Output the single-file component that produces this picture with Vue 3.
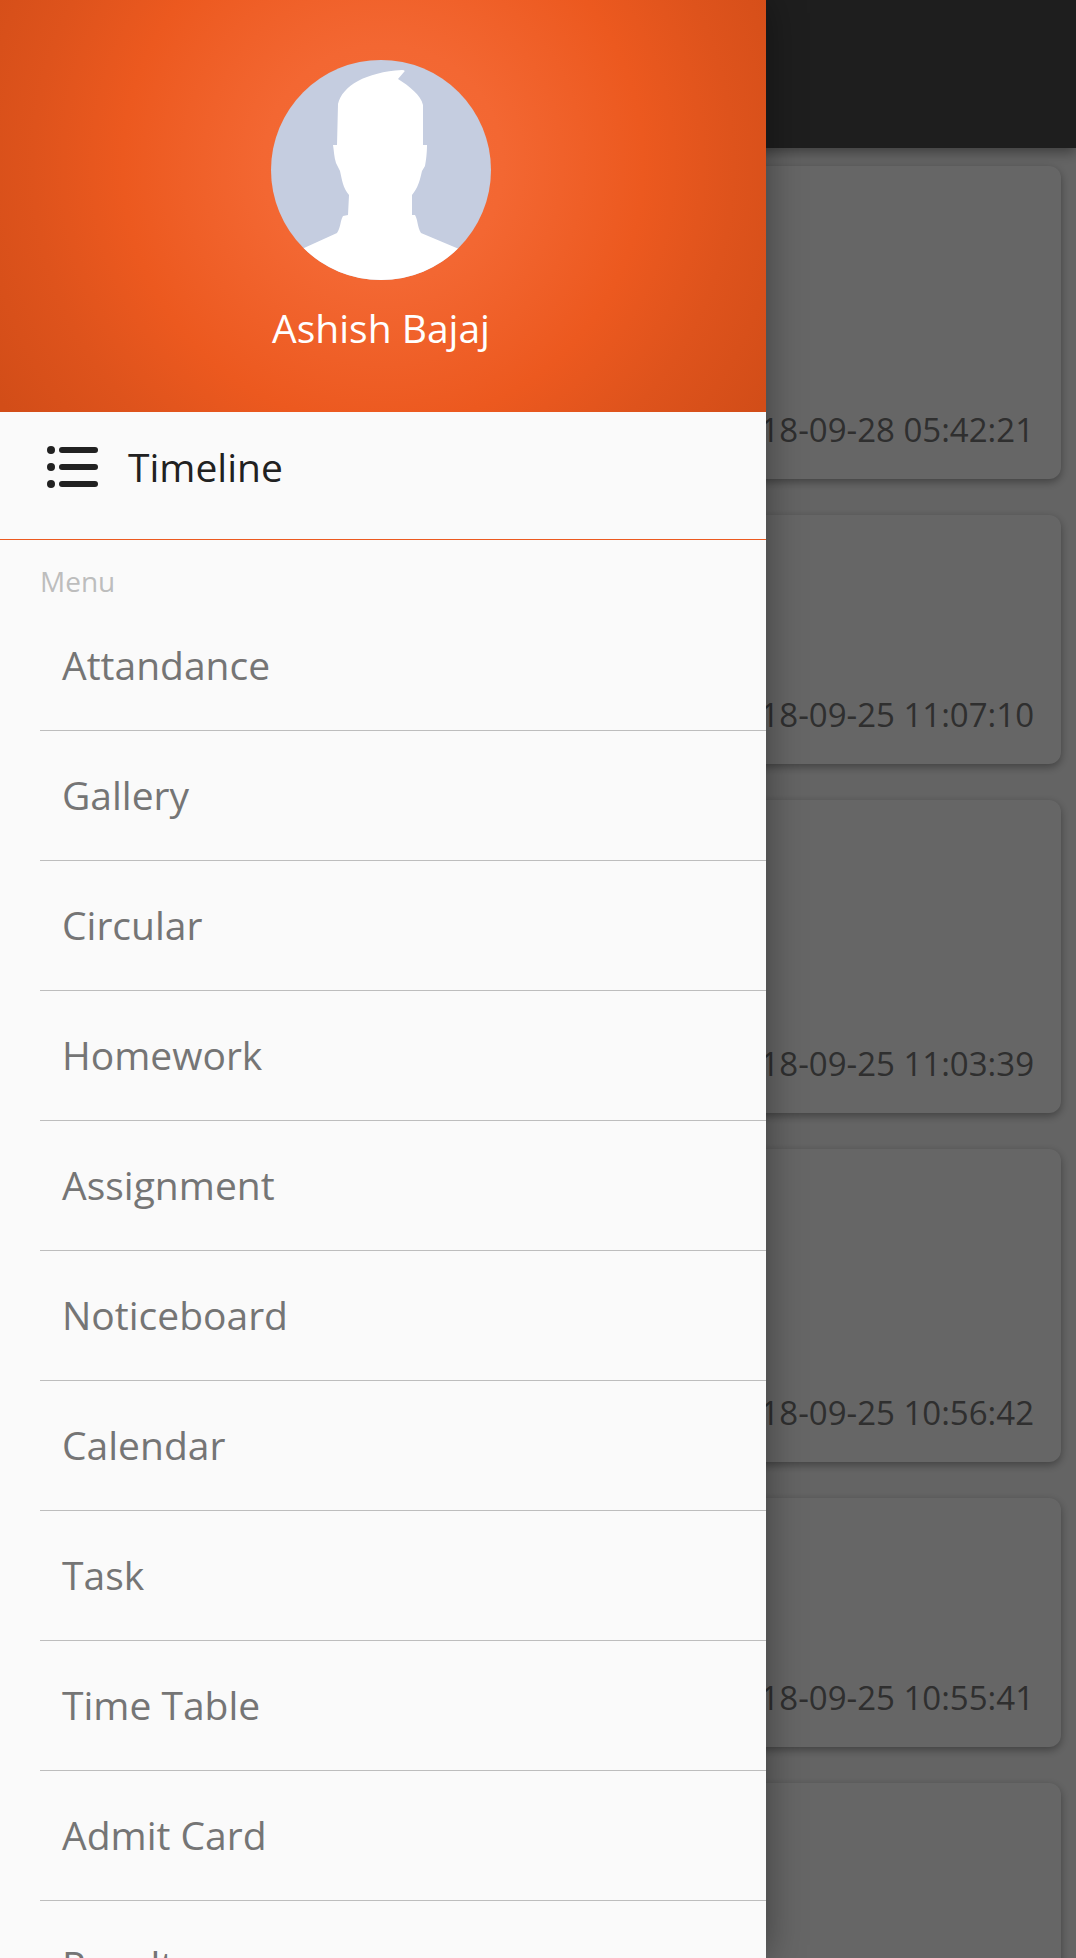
<script setup>
const posts = [
  { id: 1, time: '2018-09-28 05:42:21', tall: true },
  { id: 2, time: '2018-09-25 11:07:10', tall: false },
  { id: 3, time: '2018-09-25 11:03:39', tall: true },
  { id: 4, time: '2018-09-25 10:56:42', tall: true },
  { id: 5, time: '2018-09-25 10:55:41', tall: false },
  { id: 6, time: '', tall: true },
]

const menu = [
  'Attandance',
  'Gallery',
  'Circular',
  'Homework',
  'Assignment',
  'Noticeboard',
  'Calendar',
  'Task',
  'Time Table',
  'Admit Card',
  'Result',
]
</script>

<template>
  <div class="app">
    <header class="app-bar"></header>
    <main class="feed">
      <article v-for="post in posts" :key="post.id" class="card" :class="{ tall: post.tall }">
        <time v-if="post.time">{{ post.time }}</time>
      </article>
    </main>

    <div class="scrim"></div>

    <aside class="drawer">
      <div class="profile">
        <svg class="avatar" viewBox="0 0 220 220" aria-hidden="true">
          <defs>
            <clipPath id="avatar-clip"><circle cx="110" cy="110" r="110" /></clipPath>
          </defs>
          <g clip-path="url(#avatar-clip)">
            <rect width="220" height="220" fill="#c5cde0" />
            <path
              fill="#fff"
              d="M67 44C69 35 76 27 87 21C98 15 113 11 131 10Q135 10 133 12L127 19C138 26 150 35 152 45V85H156C156 93 155 101 154 106L151 111C149 120 147 128 141 135V155H144C147 160 146 166 150 173L188 189L220 210V220H0V210L33 188L66 173C70 167 69 161 72 156L77 155L78 135C72 128 71 120 69 111L65 103C63 97 63 91 62 85H66Z"
            />
          </g>
        </svg>
        <span class="name">Ashish Bajaj</span>
      </div>

      <nav>
        <a class="timeline" href="#timeline">
          <svg class="list-icon" viewBox="0 0 52 42" aria-hidden="true">
            <g fill="#212121">
              <circle cx="4" cy="4" r="4" />
              <circle cx="4" cy="21" r="4" />
              <circle cx="4" cy="38" r="4" />
              <rect x="12" y="1" width="39" height="6" rx="3" />
              <rect x="12" y="18" width="39" height="6" rx="3" />
              <rect x="12" y="35" width="39" height="6" rx="3" />
            </g>
          </svg>
          <span>Timeline</span>
        </a>
        <h2 class="section">Menu</h2>
        <ul class="menu">
          <li v-for="item in menu" :key="item">
            <a :href="'#' + item.toLowerCase().replace(' ', '-')">{{ item }}</a>
          </li>
        </ul>
      </nav>
    </aside>
  </div>
</template>

<style>
body {
  margin: 0;
}
</style>

<style scoped>
.app {
  position: relative;
  height: 100vh;
  overflow: hidden;
  background: #fafafa;
  font-family: "Open Sans", "Noto Sans", sans-serif;
}

.app-bar {
  position: relative;
  height: 148px;
  background: #4b4b4b;
  box-shadow: 0 4px 12px rgba(0, 0, 0, 0.4);
}

.feed {
  display: flex;
  flex-direction: column;
  gap: 36px;
  padding: 18px 15px;
}

.card {
  display: flex;
  flex: none;
  align-items: flex-end;
  justify-content: flex-end;
  box-sizing: border-box;
  height: 249px;
  padding: 0 27px 26px;
  border-radius: 12px;
  background: #fff;
  box-shadow: 0 3px 8px rgba(0, 0, 0, 0.35);
  color: #757575;
  font-size: 33px;
  line-height: 46px;
}

.card.tall {
  height: 313px;
}

.scrim {
  position: absolute;
  inset: 0;
  background: rgba(0, 0, 0, 0.6);
}

.drawer {
  position: absolute;
  inset: 0 310px 0 0;
  overflow: hidden;
  background: #fafafa;
  box-shadow: 0 0 36px rgba(0, 0, 0, 0.4);
}

.profile {
  display: flex;
  flex-direction: column;
  align-items: center;
  box-sizing: border-box;
  height: 412px;
  padding: 60px 4px 0 0;
  background: radial-gradient(circle at 50% 40%, #f56c38 0, #f36732 120px, #ec591f 260px, #de531c 350px, #d24d18 450px);
}

.avatar {
  width: 220px;
  height: 220px;
}

.name {
  margin-top: 21px;
  color: #fff;
  font-size: 39px;
  line-height: 54px;
}

.timeline {
  display: flex;
  align-items: center;
  gap: 29px;
  height: 109px;
  padding: 0 47px 18px;
  border-bottom: 1px solid #ec5a20;
  color: #212121;
  font-size: 39px;
  line-height: 54px;
  text-decoration: none;
}

.list-icon {
  width: 52px;
  height: 42px;
}

.section {
  margin: 0;
  padding: 22px 40px 20px;
  color: #bdbdbd;
  font-size: 28px;
  font-weight: 400;
  line-height: 38px;
}

.menu {
  margin: 0 0 0 40px;
  padding: 0;
  list-style: none;
}

.menu li {
  border-bottom: 1px solid #bdbdbd;
}

.menu a {
  display: block;
  padding: 37px 22px 38px;
  color: #757575;
  font-size: 39px;
  line-height: 54px;
  text-decoration: none;
}

.menu li:first-child a {
  padding-top: 18px;
}
</style>
